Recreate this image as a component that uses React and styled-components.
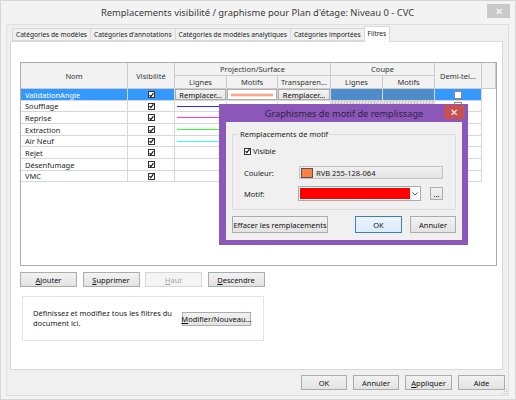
import React from 'react'
import styled, { createGlobalStyle, css } from 'styled-components'

const GlobalStyle = createGlobalStyle`
  html, body { margin: 0; padding: 0; }
  body { font-family: "Noto Sans", "Liberation Sans", sans-serif; background: #fff; }
  * { box-sizing: border-box; }
`

const Window = styled.div`
  position: relative;
  width: 516px;
  height: 400px;
  background: #f3f3f3;
  border: 1px solid #d6d6d6;
  padding: 0 6px 3px 5px;
  display: flex;
  flex-direction: column;
`

const TitleBar = styled.div`
  height: 23px;
  display: flex;
  align-items: center;
  justify-content: center;
  font-size: 9.4px;
  color: #3a3a3a;
`

const CloseBtn = styled.div`
  position: absolute;
  top: ${p => p.$top}px;
  right: ${p => p.$right}px;
  width: ${p => p.$w}px;
  height: 14px;
  background: ${p => p.$bg};
  color: #fff;
  font-size: 10px;
  display: flex;
  align-items: center;
  justify-content: center;
  line-height: 1;
`

const Client = styled.div`
  flex: 1;
  border: 1px solid #dedede;
  background: #f0f0f0;
  padding: 2px 5px 0 3px;
  display: flex;
  flex-direction: column;
  position: relative;
`

const TabStrip = styled.div`
  display: flex;
  align-items: flex-end;
  height: 14px;
  padding-left: 2px;
  position: relative;
  z-index: 1;
`

const Tab = styled.div`
  height: ${p => (p.$active ? 16 : 13)}px;
  margin-bottom: ${p => (p.$active ? -1 : 0)}px;
  padding: 0 3px;
  border: 1px solid #d9d9d9;
  border-right: ${p => (p.$active ? '1px solid #d9d9d9' : 'none')};
  border-bottom: ${p => (p.$active ? 'none' : '1px solid #d9d9d9')};
  background: ${p => (p.$active ? '#fff' : '#f0f0f0')};
  font-size: 6.6px;
  color: #222;
  display: flex;
  align-items: ${p => (p.$active ? 'flex-start' : 'center')};
  padding-top: ${p => (p.$active ? 2 : 0)}px;
  white-space: nowrap;
`

const Panel = styled.div`
  height: 329px;
  background: #fff;
  border: 1px solid #d9d9d9;
  padding: 20px 0 0 9px;
`

const Grid = styled.div`
  width: 477px;
  height: 204px;
  border: 1px solid #acacac;
  display: grid;
  grid-template-columns: 107px 47px 52px 51px 53px 52px 52px 47px 14px;
  grid-template-rows: 13px 13px 12px 11px 12px 12px 11px 12px 12px 11px;
  align-content: start;
  font-size: 7.5px;
`

const HeadCell = styled.div`
  grid-column: ${p => p.$col};
  grid-row: ${p => p.$row};
  background: #f2f2f2;
  border-right: 1px solid #cbcbcb;
  border-bottom: 1px solid #cbcbcb;
  display: flex;
  align-items: center;
  justify-content: center;
  color: #333;
  white-space: nowrap;
  overflow: hidden;
`

const Cell = styled.div`
  border-right: 1px solid #d7d7d7;
  border-bottom: 1px solid #d7d7d7;
  display: flex;
  align-items: center;
  justify-content: ${p => (p.$center ? 'center' : 'flex-start')};
  padding-left: ${p => (p.$pad ? 4 : 0)}px;
  color: ${p => (p.$sel ? '#fff' : '#1e1e1e')};
  background: ${p => (p.$sel ? '#3399ff' : '#fff')};
  white-space: nowrap;
  position: relative;
  ${p => p.$coupe && css`
    background-color: ${p.$sel ? '#4f8dca' : '#dcdcdc'};
    background-image: ${p.$sel ? 'none' : 'repeating-conic-gradient(#c8c8c8 0 25%, #ececec 0 50%)'};
    background-size: 3px 3px;
  `}
`

const EmptyCell = styled.div`
  grid-column: 9;
`

const LineSwatch = styled.div`
  flex: 1;
  height: 1px;
  margin: 0 1px 0 2px;
  border-top: 1px solid ${p => p.$color};
`

const CellButton = styled.div`
  width: 100%;
  height: 100%;
  border: 1px solid #acacac;
  background: linear-gradient(#f4f4f4, #e4e4e4);
  font-size: 7.5px;
  color: #111;
  display: flex;
  align-items: center;
  justify-content: center;
`

const PatternButton = styled(CellButton)`
  background: #fff;
  padding: 0 3px;
`

const OrangeLine = styled.div`
  width: 100%;
  height: 2px;
  background: #f6a887;
  box-shadow: 0 -1px 0 #fde2d6, 0 1px 0 #fde2d6;
`

const Check = styled.div`
  width: ${p => p.$size || 7}px;
  height: ${p => p.$size || 7}px;
  border: 1px solid ${p => (p.$light ? '#8a8a8a' : '#333')};
  background: #fff;
  display: flex;
  align-items: center;
  justify-content: center;
  flex-shrink: 0;
`

const CheckBox = ({ checked, size, light }) => (
  <Check $size={size} $light={light}>
    {checked && (
      <svg width="6" height="6" viewBox="0 0 6 6">
        <path d="M0.6 3.2 L2.2 4.9 L5.4 0.8" fill="none" stroke="#111" strokeWidth="1.3" />
      </svg>
    )}
  </Check>
)

const ButtonRow = styled.div`
  display: flex;
  gap: ${p => p.$gap}px;
  margin-top: ${p => p.$mt}px;
  margin-left: ${p => (p.$push ? 'auto' : '0')};
`

const Btn = styled.div`
  width: ${p => p.$w}px;
  height: ${p => p.$h || 15}px;
  border: 1px solid ${p => (p.$default ? '#3c7fb1' : p.disabled ? '#d5d5d5' : '#acacac')};
  background: ${p => (p.disabled ? '#f4f4f4' : p.$default ? 'linear-gradient(#eaf4fc, #dcecfc)' : 'linear-gradient(#f2f2f2, #e3e3e3)')};
  color: ${p => (p.disabled ? '#a3a3a3' : '#111')};
  font-size: 7.5px;
  display: flex;
  align-items: center;
  justify-content: center;
  white-space: nowrap;
  u { text-decoration: underline; text-underline-offset: 1px; }
`

const InfoBox = styled.div`
  margin: 9px 0 0 2px;
  width: 242px;
  height: 45px;
  border: 1px solid #e3e3e3;
  display: flex;
  align-items: center;
  justify-content: space-between;
  padding: 0 12px 0 10px;
`

const InfoText = styled.div`
  font-size: 7.5px;
  color: #222;
  width: 140px;
  line-height: 9.5px;
`

const Footer = styled.div`
  display: flex;
  justify-content: flex-end;
  gap: 6px;
  margin: 5px -2px 0 0;
`

const Grip = styled.svg`
  position: absolute;
  right: 0;
  bottom: 0;
`

/* dialog */
const Dialog = styled.div`
  position: absolute;
  left: 218px;
  top: 103px;
  width: 249px;
  height: 141px;
  background: #8b58b9;
  padding: 0 6px 5px 7px;
  display: flex;
  flex-direction: column;
  z-index: 5;
`

const DialogTitle = styled.div`
  height: 18px;
  display: flex;
  align-items: center;
  justify-content: center;
  font-size: 9.2px;
  color: #2f2140;
`

const DialogBody = styled.div`
  flex: 1;
  background: #f0f0f0;
  padding: 7px 6px 7px 6px;
  display: flex;
  flex-direction: column;
`

const Group = styled.fieldset`
  margin: 0;
  border: 1px solid #dcdcdc;
  padding: 7px 12px 7px 11px;
  height: 81px;
  legend {
    font-size: 7.5px;
    color: #222;
    padding: 0 1px;
    margin-left: -5px;
  }
`

const FieldRow = styled.div`
  display: grid;
  grid-template-columns: 55px 1fr;
  align-items: center;
  font-size: 7.5px;
  color: #222;
  margin-top: ${p => p.$mt}px;
`

const CheckRow = styled.div`
  display: flex;
  align-items: center;
  gap: 2px;
  font-size: 7.5px;
  color: #222;
`

const ColorField = styled.div`
  height: 13px;
  border: 1px solid #c3c3c3;
  background: linear-gradient(#efefef, #e4e4e4);
  display: flex;
  align-items: center;
  gap: 3px;
  padding-left: 1px;
`

const Swatch = styled.div`
  width: 12px;
  height: 10px;
  border: 1px solid #555;
  background: #ff8040;
`

const MotifWrap = styled.div`
  display: flex;
  align-items: center;
  gap: 9px;
  margin-left: -1px;
`

const Combo = styled.div`
  width: 123px;
  height: 15px;
  border: 1px solid #acacac;
  background: #fff;
  display: flex;
`

const ComboFill = styled.div`
  flex: 1;
  background: #ff0000;
  margin: 1px 0 1px 1px;
`

const ComboArrow = styled.div`
  width: 10px;
  display: flex;
  align-items: center;
  justify-content: center;
`

const rows = [
  { name: 'ValidationAngle', sel: true },
  { name: 'Soufflage', line: '#2a2aff' },
  { name: 'Reprise', line: '#ff33ff' },
  { name: 'Extraction', line: '#33ff33' },
  { name: 'Air Neuf', line: '#33ffff' },
  { name: 'Rejet' },
  { name: 'Désenfumage' },
  { name: 'VMC' },
]

export default function App() {
  return (
    <>
      <GlobalStyle />
      <Window>
        <TitleBar>Remplacements visibilité / graphisme pour Plan d'étage: Niveau 0 - CVC</TitleBar>
        <CloseBtn $top={3} $right={5} $w={23} $bg="#c9c9c9">✕</CloseBtn>
        <Client>
          <TabStrip>
            <Tab>Catégories de modèles</Tab>
            <Tab>Catégories d'annotations</Tab>
            <Tab>Catégories de modèles analytiques</Tab>
            <Tab>Catégories importées</Tab>
            <Tab $active>Filtres</Tab>
          </TabStrip>
          <Panel>
            <Grid>
              <HeadCell $col="1" $row="1 / 3">Nom</HeadCell>
              <HeadCell $col="2" $row="1 / 3">Visibilité</HeadCell>
              <HeadCell $col="3 / 6" $row="1">Projection/Surface</HeadCell>
              <HeadCell $col="6 / 8" $row="1">Coupe</HeadCell>
              <HeadCell $col="8" $row="1 / 3">Demi-tei...</HeadCell>
              <HeadCell $col="9" $row="1 / 3" />
              <HeadCell $col="3" $row="2">Lignes</HeadCell>
              <HeadCell $col="4" $row="2">Motifs</HeadCell>
              <HeadCell $col="5" $row="2">Transparen...</HeadCell>
              <HeadCell $col="6" $row="2">Lignes</HeadCell>
              <HeadCell $col="7" $row="2">Motifs</HeadCell>
              {rows.map(r => (
                <React.Fragment key={r.name}>
                  <Cell $pad $sel={r.sel}>{r.name}</Cell>
                  <Cell $center $sel={r.sel}><CheckBox checked /></Cell>
                  <Cell>
                    {r.sel ? <CellButton>Remplacer...</CellButton> : r.line && <LineSwatch $color={r.line} />}
                  </Cell>
                  <Cell>
                    {r.sel && <PatternButton><OrangeLine /></PatternButton>}
                  </Cell>
                  <Cell>{r.sel && <CellButton>Remplacer...</CellButton>}</Cell>
                  <Cell $coupe $sel={r.sel} />
                  <Cell $coupe $sel={r.sel} />
                  <Cell $center $sel={r.sel}><CheckBox size={8} light /></Cell>
                  <EmptyCell />
                </React.Fragment>
              ))}
            </Grid>
            <ButtonRow $gap={5.5} $mt={6}>
              <Btn $w={57}><u>A</u>jouter</Btn>
              <Btn $w={57}><u>S</u>upprimer</Btn>
              <Btn $w={57} disabled><u>H</u>aut</Btn>
              <Btn $w={57}><u>D</u>escendre</Btn>
            </ButtonRow>
            <InfoBox>
              <InfoText>Définissez et modifiez tous les filtres du document ici.</InfoText>
              <Btn $w={69} $h={14}><u>M</u>odifier/Nouveau...</Btn>
            </InfoBox>
          </Panel>
          <Footer>
            <Btn $w={46}>OK</Btn>
            <Btn $w={46}>Annuler</Btn>
            <Btn $w={47}><u>A</u>ppliquer</Btn>
            <Btn $w={47}>Aide</Btn>
          </Footer>
          <Grip width="8" height="8" viewBox="0 0 8 8">
            <g fill="#bdbdbd">
              <rect x="6" y="2" width="1" height="1" />
              <rect x="4" y="4" width="1" height="1" />
              <rect x="6" y="4" width="1" height="1" />
              <rect x="2" y="6" width="1" height="1" />
              <rect x="4" y="6" width="1" height="1" />
              <rect x="6" y="6" width="1" height="1" />
            </g>
          </Grip>
        </Client>

        <Dialog>
          <DialogTitle>Graphismes de motif de remplissage</DialogTitle>
          <CloseBtn $top={1} $right={4} $w={20} $bg="#c75050">✕</CloseBtn>
          <DialogBody>
            <Group>
              <legend>Remplacements de motif</legend>
              <CheckRow><CheckBox checked /> Visible</CheckRow>
              <FieldRow $mt={10}>
                <span>Couleur:</span>
                <ColorField><Swatch />RVB 255-128-064</ColorField>
              </FieldRow>
              <FieldRow $mt={7}>
                <span>Motif:</span>
                <MotifWrap>
                  <Combo>
                    <ComboFill />
                    <ComboArrow>
                      <svg width="6" height="4" viewBox="0 0 6 4">
                        <path d="M0.5 0.5 L3 3 L5.5 0.5" fill="none" stroke="#444" strokeWidth="0.9" />
                      </svg>
                    </ComboArrow>
                  </Combo>
                  <Btn $w={13} $h={13}>...</Btn>
                </MotifWrap>
              </FieldRow>
            </Group>
            <ButtonRow $gap={8} $mt={6}>
              <Btn $w={96} $h={17}>Effacer les remplacements</Btn>
              <ButtonRow $gap={8} $mt={0} $push>
                <Btn $w={47} $h={17} $default>OK</Btn>
                <Btn $w={46} $h={17}>Annuler</Btn>
              </ButtonRow>
            </ButtonRow>
          </DialogBody>
        </Dialog>
      </Window>
    </>
  )
}
